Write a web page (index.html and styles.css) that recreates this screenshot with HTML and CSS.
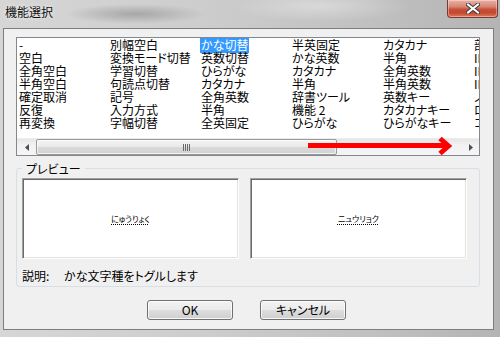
FILE: index.html
```html
<!DOCTYPE html>
<html lang="ja">
<head>
<meta charset="utf-8">
<link rel="stylesheet" href="styles.css">
</head>
<body>
<div class="window">
  <div class="titlebar">
    <span class="title">機能選択</span>
    <div class="close">
      <svg width="14" height="11" viewBox="0 0 14 11">
        <path d="M2 1.5 L12 9.5 M12 1.5 L2 9.5" stroke="#3c3c3c" stroke-width="4" stroke-linecap="square"/>
        <path d="M2 1.5 L12 9.5 M12 1.5 L2 9.5" stroke="#ffffff" stroke-width="2" stroke-linecap="square"/>
      </svg>
    </div>
  </div>
  <div class="body">
    <div class="client">
      <div class="listbox">
        <div class="items">
          <span>-</span><span>空白</span><span>全角空白</span><span>半角空白</span><span>確定取消</span><span>反復</span><span>再変換</span>
          <span>別幅空白</span><span>変換モード切替</span><span>学習切替</span><span>句読点切替</span><span>記号</span><span>入力方式</span><span>字幅切替</span>
          <span><b class="sel">かな切替</b></span><span>英数切替</span><span>ひらがな</span><span>カタカナ</span><span>全角英数</span><span>半角</span><span>全英固定</span>
          <span>半英固定</span><span>かな英数</span><span>カタカナ</span><span>半角</span><span>辞書ツール</span><span>機能 2</span><span>ひらがな</span>
          <span>カタカナ</span><span>半角</span><span>全角英数</span><span>半角英数</span><span>英数キー</span><span>カタカナキー</span><span>ひらがなキー</span>
          <span>部分確定</span><span>IMEオン</span><span>IMEオフ</span><span>IME切替</span><span>ノード</span><span>ロック</span><span>コード</span>
        </div>
        <div class="hscroll">
          <div class="sb-btn sb-left">
            <svg width="4" height="7" viewBox="0 0 4 7"><path d="M4 0 L0 3.5 L4 7 Z" fill="#4d4d4d"/></svg>
          </div>
          <div class="sb-track">
            <div class="sb-thumb">
              <svg width="7" height="7" viewBox="0 0 7 7"><path d="M0.5 0 V7 M2.5 0 V7 M4.5 0 V7 M6.5 0 V7" stroke="#6a6a6a" stroke-width="1"/></svg>
            </div>
          </div>
          <div class="sb-btn sb-right">
            <svg width="4" height="7" viewBox="0 0 4 7"><path d="M0 0 L4 3.5 L0 7 Z" fill="#4d4d4d"/></svg>
          </div>
        </div>
      </div>
      <fieldset class="group">
        <legend>プレビュー</legend>
        <div class="boxes">
          <div class="pbox"><span class="ptext">にゅうりょく</span></div>
          <div class="pbox"><span class="ptext">ニュウリョク</span></div>
        </div>
        <div class="desc"><span class="dlabel">説明:</span><span>かな文字種をトグルします</span></div>
      </fieldset>
      <div class="buttons">
        <button class="btn">OK</button>
        <button class="btn">キャンセル</button>
      </div>
    </div>
  </div>
  <svg class="annot" width="500" height="337" viewBox="0 0 500 337">
    <path d="M308 145.5 H446" stroke="#ff0000" stroke-width="5"/>
    <path d="M440 138.5 L448.5 146 L440 153.5" fill="none" stroke="#ff0000" stroke-width="5" stroke-linejoin="miter"/>
  </svg>
</div>
</body>
</html>
```
FILE: styles.css
```css
* { box-sizing: border-box; }
html, body { margin: 0; padding: 0; }
body {
  width: 500px;
  height: 337px;
  overflow: hidden;
  font-family: "Noto Sans CJK JP", "Noto Sans", sans-serif;
  font-size: 12px;
  font-feature-settings: "palt";
  color: #000;
}
.window {
  position: relative;
  width: 500px;
  height: 337px;
  background:
    radial-gradient(ellipse 70px 10px at 135px 14px, rgba(90,90,90,0.35), rgba(90,90,90,0) 100%),
    radial-gradient(ellipse 90px 16px at 320px 6px, rgba(255,255,255,0.35), rgba(255,255,255,0) 100%),
    linear-gradient(to right, #d6d6d6 0%, #cdcdcd 40%, #c0c0c0 75%, #b4b4b4 100%);
  display: flex;
  flex-direction: column;
}
.titlebar {
  height: 28px;
  display: flex;
  align-items: flex-start;
}
.title {
  padding-left: 5px;
  line-height: 24px;
  font-size: 12px;
  color: #101010;
  text-shadow: 0 0 4px rgba(255,255,255,0.9);
}
.close {
  margin-left: auto;
  margin-right: 2px;
  width: 51px;
  height: 18px;
  border: 1px solid #7a3a30;
  border-top: none;
  border-radius: 0 0 4px 4px;
  background: linear-gradient(#e9b2a4 0%, #d88574 40%, #c3503a 55%, #c6472e 75%, #dc7a5c 100%);
  box-shadow: inset 0 0 0 1px rgba(255,255,255,0.35);
  display: flex;
  align-items: center;
  justify-content: center;
}
.body {
  flex: 1;
  padding: 0 6px 7px 3px;
  display: flex;
}
.client {
  width: 491px;
  height: 302px;
  border: 1px solid #7d7d7d;
  background: #f0f0f0;
  padding: 8px 0 0 12px;
  display: flex;
  flex-direction: column;
}
.listbox {
  width: 464px;
  height: 119px;
  border: 1px solid #828790;
  background: #fff;
  display: flex;
  flex-direction: column;
}
.items {
  height: 100px;
  padding-left: 2px;
  display: grid;
  grid-auto-flow: column;
  grid-template-rows: repeat(7, 13px);
  grid-auto-columns: 91px;
  line-height: 13px;
  white-space: nowrap;
  overflow: hidden;
}
.items span { display: block; }
.sel {
  font-weight: normal;
  background: #3399ff;
  color: #fff;
  padding: 0 1px;
  margin-left: -1px;
}
.hscroll {
  height: 17px;
  display: flex;
  background: linear-gradient(#e6e6e6, #f2f2f2 40%, #f4f4f4);
  border-top: 1px solid #ececec;
}
.sb-btn {
  display: flex;
  align-items: center;
  justify-content: center;
}
.sb-left { width: 19px; }
.sb-right { width: 17px; }
.sb-track {
  flex: 1;
  display: flex;
  align-items: stretch;
}
.sb-thumb {
  width: 301px;
  border: 1px solid #999999;
  border-radius: 2px;
  background: linear-gradient(#f3f3f3 0%, #e9e9e9 50%, #d9d9d9 51%, #d3d3d3 100%);
  box-shadow: inset 0 0 0 1px rgba(255,255,255,0.7);
  display: flex;
  align-items: center;
  justify-content: center;
}
.group {
  margin: 6px 0 0 0;
  width: 464px;
  border: 1px solid #d5dfe5;
  border-radius: 3px;
  padding: 3px 11px 4px 5px;
  min-width: 0;
}
.group legend {
  padding: 0 4px;
  line-height: 13px;
  font-size: 12px;
}
.boxes {
  display: flex;
  gap: 11px;
}
.pbox {
  width: 217px;
  height: 81px;
  background: #fff;
  border: 1px solid;
  border-color: #a0a0a0 #ffffff #ffffff #a0a0a0;
  box-shadow: inset 1px 1px 0 #696969, inset -1px -1px 0 #e3e3e3;
  display: flex;
  align-items: center;
  justify-content: center;
}
.ptext {
  font-size: 8px;
  line-height: 10px;
  text-decoration: underline dotted #000;
  text-underline-offset: 2px;
}
.desc {
  margin-top: 10px;
  line-height: 13px;
  display: flex;
}
.dlabel { width: 42px; }
.buttons {
  margin-top: 13px;
  padding-left: 131px;
  display: flex;
  gap: 27px;
}
.btn {
  width: 86px;
  height: 20px;
  padding: 0;
  font-family: inherit;
  font-size: 12px;
  font-feature-settings: "palt";
  color: #000;
  line-height: 16px;
  border: 1px solid #707070;
  border-radius: 3px;
  background: linear-gradient(#f2f2f2 0%, #ebebeb 50%, #dddddd 51%, #cfcfcf 100%);
  box-shadow: inset 0 0 0 1px rgba(255,255,255,0.8);
}
.annot {
  position: absolute;
  left: 0;
  top: 0;
  pointer-events: none;
}
```
